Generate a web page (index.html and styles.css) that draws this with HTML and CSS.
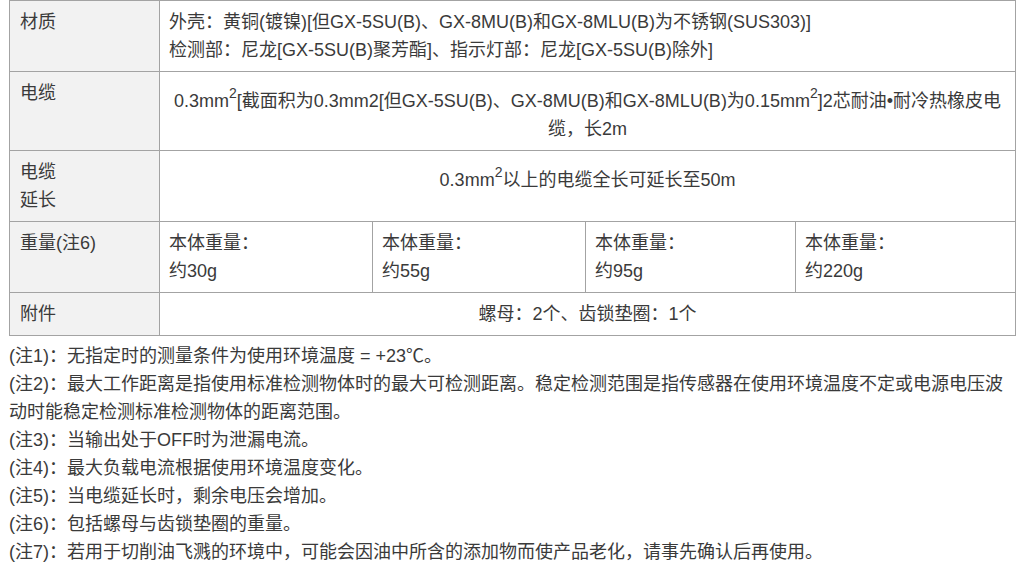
FILE: index.html
```html
<!DOCTYPE html>
<html lang="zh-CN">
<head>
<meta charset="utf-8">
<link rel="stylesheet" href="styles.css">
</head>
<body>
<div class="page">
  <table class="spec">
    <colgroup>
      <col class="col-head">
      <col class="col-w1">
      <col class="col-w2">
      <col class="col-w3">
      <col class="col-w4">
    </colgroup>
    <tbody>
      <tr>
        <th>材质</th>
        <td colspan="4">外壳：黄铜(镀镍)[但GX-5SU(B)、GX-8MU(B)和GX-8MLU(B)为不锈钢(SUS303)]<br>检测部：尼龙[GX-5SU(B)聚芳酯]、指示灯部：尼龙[GX-5SU(B)除外]</td>
      </tr>
      <tr>
        <th>电缆</th>
        <td colspan="4" class="center">0.3mm<sup>2</sup>[截面积为0.3mm2[但GX-5SU(B)、GX-8MU(B)和GX-8MLU(B)为0.15mm<sup>2</sup>]2芯耐油•耐冷热橡皮电缆，长2m</td>
      </tr>
      <tr>
        <th>电缆<br>延长</th>
        <td colspan="4" class="center">0.3mm<sup>2</sup>以上的电缆全长可延长至50m</td>
      </tr>
      <tr>
        <th>重量(注6)</th>
        <td>本体重量：<br>约30g</td>
        <td>本体重量：<br>约55g</td>
        <td>本体重量：<br>约95g</td>
        <td>本体重量：<br>约220g</td>
      </tr>
      <tr>
        <th>附件</th>
        <td colspan="4" class="center">螺母：2个、齿锁垫圈：1个</td>
      </tr>
    </tbody>
  </table>
  <div class="notes">
    <p>(注1)：无指定时的测量条件为使用环境温度 = +23℃。</p>
    <p>(注2)：最大工作距离是指使用标准检测物体时的最大可检测距离。稳定检测范围是指传感器在使用环境温度不定或电源电压波动时能稳定检测标准检测物体的距离范围。</p>
    <p>(注3)：当输出处于OFF时为泄漏电流。</p>
    <p>(注4)：最大负载电流根据使用环境温度变化。</p>
    <p>(注5)：当电缆延长时，剩余电压会增加。</p>
    <p>(注6)：包括螺母与齿锁垫圈的重量。</p>
    <p>(注7)：若用于切削油飞溅的环境中，可能会因油中所含的添加物而使产品老化，请事先确认后再使用。</p>
  </div>
</div>
</body>
</html>
```

FILE: styles.css
```css
html, body {
  margin: 0;
  padding: 0;
  background: #ffffff;
}

.page {
  padding: 0 0 0 9px;
  width: 1006px;
  font-family: "Liberation Sans", "Noto Sans CJK SC", sans-serif;
  font-size: 18px;
  line-height: 28px;
  color: #3a3a3a;
}

.spec {
  width: 1006px;
  border-collapse: collapse;
  table-layout: fixed;
}

.col-head { width: 150px; }
.col-w1 { width: 213px; }
.col-w2 { width: 213px; }
.col-w3 { width: 210px; }
.col-w4 { width: 220px; }

.spec th,
.spec td {
  border: 1px solid #a3a3a3;
  padding: 7px 9px 7px 9px;
  vertical-align: top;
  text-align: left;
  font-weight: normal;
}

.spec th {
  background: #f2f2f2;
  padding-left: 10px;
}

.spec td.center {
  text-align: center;
}

.spec sup {
  font-size: 14px;
  line-height: 28px;
  vertical-align: 9px;
}

.notes {
  margin-top: 6px;
}

.notes p {
  margin: 0;
}
```
